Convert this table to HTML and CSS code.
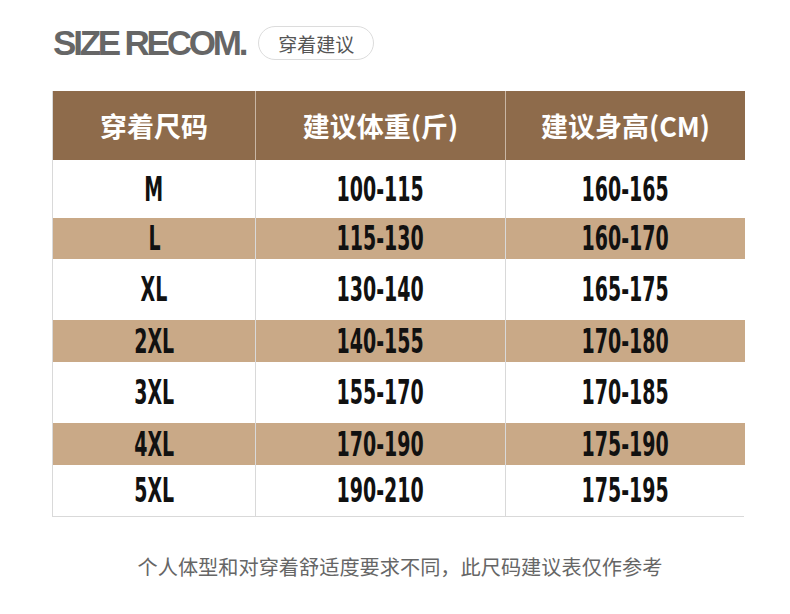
FILE: index.html
```html
<!DOCTYPE html>
<html lang="zh">
<head>
<meta charset="utf-8">
<title>Size Recommendation</title>
<link rel="stylesheet" href="styles.css">
</head>
<body>
<div class="page">
  <div class="title-row">
    <h1 class="title">SIZE RECOM.</h1>
    <span class="pill">穿着建议</span>
  </div>
  <div class="table">
    <div class="cell head">穿着尺码</div>
    <div class="cell head sep">建议体重(斤)</div>
    <div class="cell head sep">建议身高(CM)</div>

    <div class="cell"><span class="num">M</span></div>
    <div class="cell sep"><span class="num">100-115</span></div>
    <div class="cell sep"><span class="num">160-165</span></div>

    <div class="cell tan"><span class="num">L</span></div>
    <div class="cell tan sep"><span class="num">115-130</span></div>
    <div class="cell tan sep"><span class="num">160-170</span></div>

    <div class="cell"><span class="num">XL</span></div>
    <div class="cell sep"><span class="num">130-140</span></div>
    <div class="cell sep"><span class="num">165-175</span></div>

    <div class="cell tan"><span class="num">2XL</span></div>
    <div class="cell tan sep"><span class="num">140-155</span></div>
    <div class="cell tan sep"><span class="num">170-180</span></div>

    <div class="cell"><span class="num">3XL</span></div>
    <div class="cell sep"><span class="num">155-170</span></div>
    <div class="cell sep"><span class="num">170-185</span></div>

    <div class="cell tan"><span class="num">4XL</span></div>
    <div class="cell tan sep"><span class="num">170-190</span></div>
    <div class="cell tan sep"><span class="num">175-190</span></div>

    <div class="cell"><span class="num">5XL</span></div>
    <div class="cell sep"><span class="num">190-210</span></div>
    <div class="cell sep"><span class="num">175-195</span></div>
  </div>
  <p class="note">个人体型和对穿着舒适度要求不同，此尺码建议表仅作参考</p>
</div>
</body>
</html>
```

FILE: styles.css
```css
html, body {
  margin: 0;
  padding: 0;
  background: #ffffff;
}

.page {
  width: 790px;
  height: 614px;
  padding-top: 26px;
  box-sizing: border-box;
  font-family: "Noto Sans CJK SC", "Liberation Sans", sans-serif;
}

.title-row {
  display: flex;
  align-items: center;
  gap: 13px;
  padding-left: 53px;
  height: 34px;
}

.title {
  margin: 0;
  font-family: "Liberation Sans", Arial, sans-serif;
  font-weight: bold;
  font-size: 35px;
  letter-spacing: -3.2px;
  color: #666666;
  line-height: 34px;
}

.pill {
  display: flex;
  align-items: center;
  justify-content: center;
  width: 116px;
  height: 34px;
  box-sizing: border-box;
  border: 1px solid #dcdcdc;
  border-radius: 17px;
  font-size: 19px;
  color: #555555;
}

.table {
  margin: 31px 0 0 52px;
  width: 692px;
  display: grid;
  grid-template-columns: 202px 250px 240px;
  grid-template-rows: 69px 58px 41px 61px 42px 61px 42px 51px;
  box-sizing: border-box;
  border-left: 1px solid #d9d9d9;
  border-right: 1px solid #d9d9d9;
  border-bottom: 1px solid #d9d9d9;
}

.cell {
  display: flex;
  align-items: center;
  justify-content: center;
  background: #ffffff;
  min-width: 0;
}

.cell.sep {
  border-left: 1px solid #d9d9d9;
}

.cell.head {
  background: #8e6b4b;
  color: #ffffff;
  font-weight: bold;
  font-size: 27px;
}

.cell.head.sep {
  border-left: 1px solid #c9b6a4;
}

.cell.tan {
  background: #c9a987;
}

.num {
  display: inline-block;
  font-family: "Liberation Sans Narrow", "DejaVu Sans Condensed", "Liberation Sans", sans-serif;
  font-weight: bold;
  font-size: 33px;
  color: #111111;
  transform: scaleX(0.64);
  line-height: 1;
}

.note {
  margin: 36px 0 0 0;
  padding-left: 10px;
  text-align: center;
  font-size: 20.2px;
  color: #666666;
  line-height: 28px;
}
```
